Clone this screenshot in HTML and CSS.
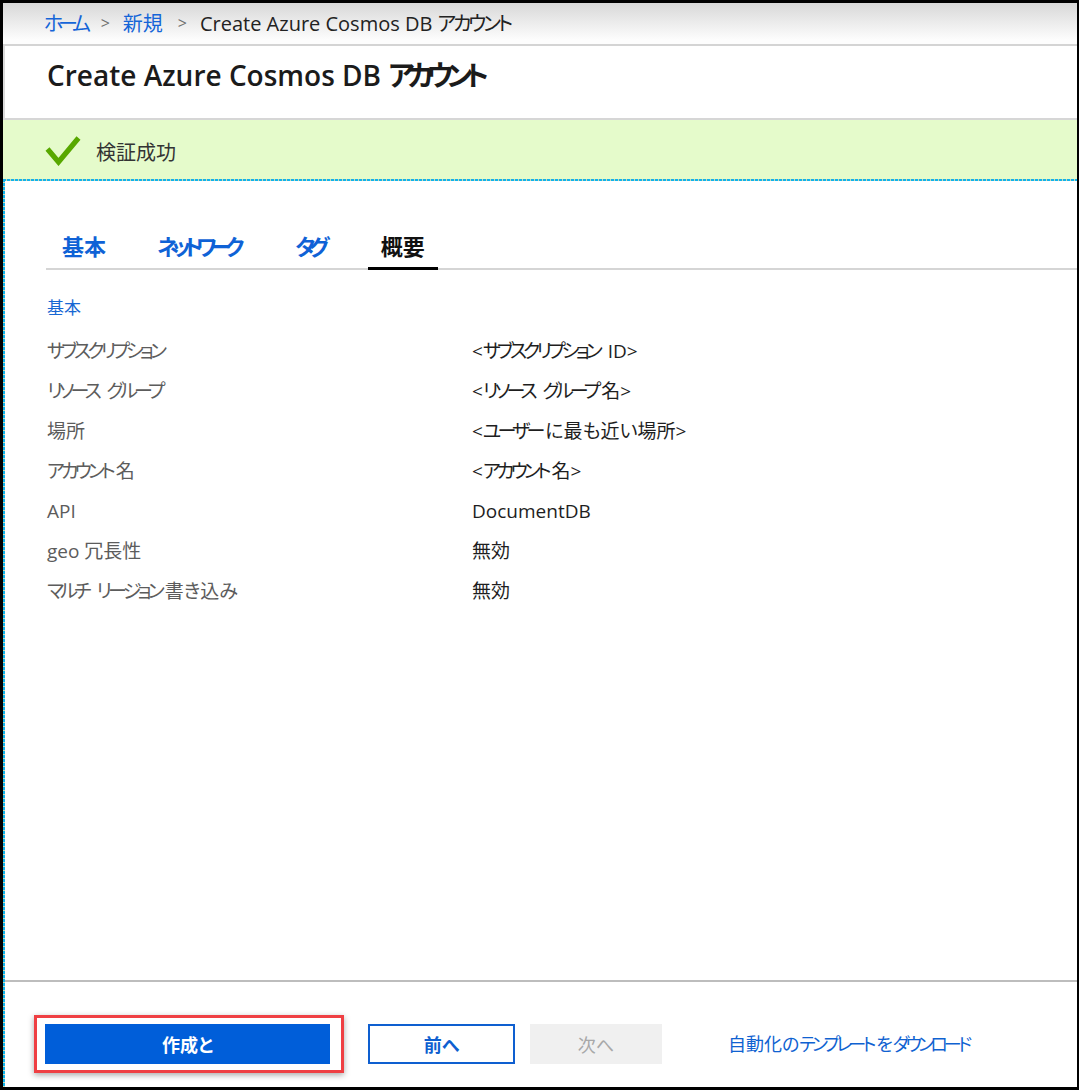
FILE: index.html
```html
<!DOCTYPE html>
<html lang="ja">
<head>
<meta charset="utf-8">
<title>Create Azure Cosmos DB アカウント</title>
<link rel="stylesheet" href="styles.css">
</head>
<body>
<div class="frame">
  <nav class="crumbs">
    <a class="crumb-link" href="#"><span class="kn">ホーム</span></a>
    <span class="sep">&gt;</span>
    <a class="crumb-link" href="#">新規</a>
    <span class="sep">&gt;</span>
    <span class="crumb-current">Create Azure Cosmos DB <span class="kn">アカウント</span></span>
  </nav>
  <header class="title-bar">
    <h1 class="title">Create Azure Cosmos DB <span class="kn">アカウント</span></h1>
  </header>
  <div class="banner">
    <svg class="check" width="36" height="30" viewBox="0 0 36 30" aria-hidden="true">
      <polyline points="2.5,13 13.5,26 33.5,2" fill="none" stroke="#58a800" stroke-width="5.2" stroke-linecap="butt" stroke-linejoin="miter"/>
    </svg>
    <span class="banner-text">検証成功</span>
  </div>
  <main class="main">
    <div class="tabs">
      <a class="tab" href="#">基本</a>
      <a class="tab" href="#"><span class="kn">ネットワーク</span></a>
      <a class="tab" href="#"><span class="kn">タグ</span></a>
      <a class="tab active" href="#">概要</a>
    </div>
    <div class="section-label">基本</div>
    <div class="summary">
      <div class="label"><span class="kn">サブスクリプション</span></div><div class="value">&lt;<span class="kn">サブスクリプション</span> ID&gt;</div>
      <div class="label"><span class="kn">リソース</span> <span class="kn">グループ</span></div><div class="value">&lt;<span class="kn">リソース</span> <span class="kn">グループ</span>名&gt;</div>
      <div class="label">場所</div><div class="value">&lt;<span class="kn">ユーザー</span>に最も近い場所&gt;</div>
      <div class="label"><span class="kn">アカウント</span>名</div><div class="value">&lt;<span class="kn">アカウント</span>名&gt;</div>
      <div class="label">API</div><div class="value">DocumentDB</div>
      <div class="label">geo 冗長性</div><div class="value">無効</div>
      <div class="label"><span class="kn">マルチ</span> <span class="kn">リージョン</span>書き込み</div><div class="value">無効</div>
    </div>
    <footer class="footer">
      <span class="highlight"><button class="btn btn-primary">作成と</button></span>
      <button class="btn btn-outline">前へ</button>
      <button class="btn btn-disabled" disabled>次へ</button>
      <a class="download" href="#">自動化の<span class="kn">テンプレート</span>を<span class="kn">ダウンロード</span></a>
    </footer>
  </main>
</div>
</body>
</html>
```

FILE: styles.css
```css
* { box-sizing: border-box; }
html, body { margin: 0; padding: 0; }
body {
  background: #fff;
  font-family: "Open Sans", "Noto Sans CJK JP", sans-serif;
  font-feature-settings: "palt";
  color: #222;
}
a { text-decoration: none; }

.kn { letter-spacing: -0.2em; margin-right: 0.2em; }

.frame {
  width: 1079px;
  height: 1090px;
  border: 3px solid #000;
  border-right-width: 2px;
  display: flex;
  flex-direction: column;
  overflow: hidden;
}

.crumbs {
  height: 43px;
  flex: none;
  background: linear-gradient(#d8d8d8, #fdfdfd 90%);
  border-bottom: 2px solid #d4d4d4;
  display: flex;
  align-items: center;
  padding-left: 41px;
  font-size: 20px;
  padding-bottom: 2px;
}
.crumbs .kn { letter-spacing: -0.26em; margin-right: 0; }
.crumbs .crumb-current .kn { letter-spacing: -0.16em; }
.crumb-link { color: #1565d8; }
.sep { color: #707070; margin: 0 13px 0 15px; font-size: 16px; }
.crumb-current { color: #222; }

.title-bar {
  height: 74px;
  flex: none;
  border-bottom: 2px solid #d6d6d6;
  border-left: 2px solid #dadada;
  display: flex;
  align-items: center;
  padding-left: 42px;
  padding-bottom: 16px;
}
.title {
  margin: 0;
  font-size: 28px;
  font-weight: 600;
  color: #1b1b1b;
}
.title .kn { letter-spacing: -0.24em; margin-right: 0; }

.banner {
  height: 59px;
  flex: none;
  background: #e5fbcb;
  display: flex;
  align-items: center;
  padding-left: 42px;
  padding-top: 3px;
}
.check { display: block; margin-right: 15px; margin-top: -1px; }
.banner-text { font-size: 20px; color: #333; }

.main {
  flex: 1;
  display: flex;
  flex-direction: column;
  padding: 2px 0 0 2px;
  background:
    repeating-linear-gradient(90deg, #12b2ea 0 3px, #cfd9b0 3px 4px) top left / 100% 2px no-repeat,
    repeating-linear-gradient(180deg, #12b2ea 0 3px, #cfd9b0 3px 4px) top left / 2px 100% no-repeat,
    #fff;
}

.tabs {
  display: flex;
  margin: 50px 0 0 41px;
  padding-left: 3px;
  gap: 25px;
  border-bottom: 2px solid #d5d5d5;
}
.tab {
  font-size: 22px;
  font-weight: 600;
  line-height: 30px;
  padding: 0 13px 6px;
  color: #0f62d6;
  border-bottom: 3px solid transparent;
  margin-bottom: -2px;
}
.tab .kn { letter-spacing: -0.3em; margin-right: 0.3em; }
.tab.active { color: #111; border-bottom-color: #000; }

.section-label {
  margin: 26px 0 0 42px;
  font-size: 17px;
  line-height: 24px;
  color: #1767d3;
}

.summary {
  display: grid;
  grid-template-columns: 425px 1fr;
  margin: 11px 0 0 42px;
  font-size: 19px;
  line-height: 40px;
}
.label { color: #5c5c5c; }
.value { color: #1e1e1e; }

.footer {
  margin-top: auto;
  border-top: 2px solid #bdbdbd;
  height: 107px;
  display: flex;
  align-items: flex-start;
  padding: 33px 0 0 29px;
}
.highlight {
  display: block;
  border: 3px solid #ef3f43;
  padding: 6px 11px 6px 8px;
  box-shadow: 0 2px 6px rgba(0, 0, 0, 0.35);
}
.btn {
  font-family: inherit;
  font-feature-settings: "palt";
  font-size: 18px;
  font-weight: 600;
  height: 40px;
  border: 0;
  padding: 0;
  display: block;
  cursor: pointer;
}
.btn-primary {
  width: 285px;
  background: #005ed9;
  color: #fff;
}
.btn-outline {
  margin: 9px 0 0 24px;
  width: 147px;
  background: #fff;
  color: #0e5fd0;
  border: 2px solid #0e5fd0;
}
.btn-disabled {
  margin: 9px 0 0 15px;
  width: 132px;
  background: #f0f0f0;
  color: #a8a8a8;
  font-weight: 400;
}
.download {
  margin: 9px 0 0 66px;
  line-height: 40px;
  font-size: 18px;
  color: #0f62d1;
}
.download .kn { letter-spacing: -0.21em; margin-right: 0.21em; }
```
